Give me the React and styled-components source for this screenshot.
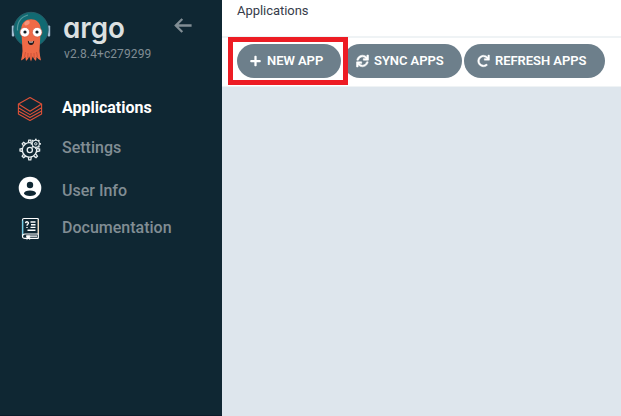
import React from 'react';
import styled, { createGlobalStyle } from 'styled-components';
import { FaPlus, FaSync, FaRedo } from 'react-icons/fa';

const GlobalStyle = createGlobalStyle`
  * { box-sizing: border-box; }
  body { margin: 0; font-family: Roboto, "Liberation Sans", sans-serif; overflow: hidden; }
`;

const Shell = styled.div`
  display: grid;
  grid-template-columns: 222px 1fr;
  width: 621px;
  height: 416px;
`;

const Sidebar = styled.nav`
  background: #0f2733;
  border-bottom: 1px solid #0b1c2b;
`;

const Brand = styled.header`
  display: flex;
  height: 88px;
  padding: 10px 0 0 11px;
`;

const Mascot = styled.svg`
  width: 40px;
  height: 53px;
  flex: none;
`;

const BrandText = styled.div`
  width: 110px;
  margin-left: 12px;
`;

const Wordmark = styled.svg`
  display: block;
  width: 64px;
  height: 36px;
  overflow: visible;
`;

const WordmarkText = styled.text`
  font-family: Inter, sans-serif;
  font-size: 29px;
  font-weight: 600;
  font-feature-settings: "cv11";
  fill: #dce0e1;
`;

const Version = styled.div`
  margin: 1px 0 0 1px;
  font-size: 12px;
  line-height: 14px;
  letter-spacing: 0.1px;
  color: #818d94;
  white-space: nowrap;
`;

const CollapseButton = styled.button`
  display: block;
  width: 20px;
  height: 20px;
  margin: 5px 0 0 0;
  padding: 0;
  border: 0;
  background: none;
  color: #818d94;
  svg { display: block; width: 20px; height: 20px; }
`;

const Menu = styled.ul`
  display: grid;
  grid-template-rows: 40px 40px 41px 40px;
  margin: 0;
  padding: 0;
  list-style: none;
`;

const MenuItem = styled.li`
  display: flex;
  align-items: center;
  padding-left: 18px;
  font-size: 16px;
  line-height: 20px;
  font-weight: ${(p) => (p.$active ? 700 : 500)};
  color: ${(p) => (p.$active ? '#ffffff' : '#818d94')};
`;

const MenuLabel = styled.span`
  margin: ${(p) => p.$shift || 0}px 0 0 20px;
`;

const MenuIcon = styled.svg`
  width: 24px;
  height: 24px;
  margin-top: ${(p) => p.$shift || 0}px;
  overflow: visible;
`;

const Main = styled.main`
  display: grid;
  grid-template-rows: 38px 49px 1fr;
  background: #dee6ed;
`;

const TitleBar = styled.div`
  padding: 3px 15px;
  border-bottom: 2px solid #eff3f5;
  background: #fff;
  font-size: 13px;
  line-height: 16px;
  letter-spacing: -0.04px;
  color: #363c4a;
`;

const Toolbar = styled.div`
  position: relative;
  display: flex;
  align-items: flex-start;
  padding: 6px 0 0 15px;
  gap: 2px;
  border-bottom: 1px solid #eff3f5;
  background: #fff;
`;

const ToolButton = styled.button`
  display: flex;
  align-items: center;
  width: ${(p) => p.$width}px;
  height: 34px;
  padding: 0 0 1px ${(p) => p.$inset}px;
  gap: 5px;
  border: 0;
  border-radius: 17px;
  background: #6d7f8b;
  color: #fff;
  font: 600 13px/16px Roboto, "Liberation Sans", sans-serif;
  letter-spacing: -0.05px;
  white-space: nowrap;
  svg { flex: none; width: 13px; height: 12px; overflow: visible; stroke: currentColor; stroke-width: ${(p) => p.$iconStroke || 0}; }
`;

const Highlight = styled.div`
  position: absolute;
  left: 6px;
  top: -1px;
  width: 120px;
  height: 48px;
  border: 5px solid #ed1c24;
  pointer-events: none;
`;

const Octopus = () => (
  <Mascot viewBox="0 0 40 53" aria-hidden="true">
    <rect x="0.8" y="15.5" width="2.6" height="11" rx="1" fill="#a5bfd4" />
    <rect x="36.6" y="15.5" width="2.6" height="11" rx="1" fill="#a5bfd4" />
    <circle cx="20" cy="19.5" r="17.2" fill="#116a72" stroke="#285d68" strokeWidth="1" />
    <path d="M6.5 20.5C6 12.5 10 7 17 5" fill="none" stroke="#56969b" strokeWidth="1.2" />
    <path d="M10.3 19C10.3 6 29.7 6 29.7 19L28.5 41Q29 47 30 50.5Q27 49.5 25.7 47L25 51Q22.5 49 21.8 46.5L20 51.5L18.2 46.5Q17.5 49 15 51L14.3 47Q13 49.5 10 50.5Q11 47 11.5 41Z" fill="#ef6a46" />
    <path d="M14.5 42L13.5 47M17 43L16.8 48M20 43V49M23 43L23.2 48M25.5 42L26.5 47" stroke="#c84d36" strokeWidth="0.8" />
    <ellipse cx="16" cy="13" rx="3" ry="2" fill="#f69379" transform="rotate(-32 16 13)" />
    <circle cx="13.8" cy="22.2" r="4.8" fill="#fff" stroke="#d84d32" strokeWidth="0.6" />
    <circle cx="26.2" cy="22.2" r="4.8" fill="#fff" stroke="#d84d32" strokeWidth="0.6" />
    <circle cx="14" cy="22" r="1.6" fill="#131d24" />
    <circle cx="26" cy="22" r="1.6" fill="#131d24" />
    <path d="M16.8 30.7Q20 32.7 23.2 30.7Q23 35 20 35Q17 35 16.8 30.7Z" fill="#241a1c" />
    <path d="M18 31.2Q20 32.3 22 31.2L21.7 32.5H18.3Z" fill="#fff" />
  </Mascot>
);

const BackArrow = () => (
  <svg viewBox="0 0 20 20" fill="none" stroke="currentColor" strokeWidth="2.3" aria-hidden="true">
    <path d="M9.3 4L2.8 10.5L9.3 17M3.2 10.5H18.6" />
  </svg>
);

const LayersIcon = () => (
  <MenuIcon viewBox="0 0 24 24" fill="none" stroke="#dd5138" strokeWidth="1.1" strokeLinejoin="round" $shift={2}>
    <path d="M12 .5L23.6 7L12 14.3L.4 7Z" />
    <path d="M.4 7V17L12 23.4L23.6 17V7M.4 10.7L12 17.6L23.6 10.7M.4 14L12 20.6L23.6 14" />
  </MenuIcon>
);

const teeth = (n) => Array.from({ length: n }, (_, i) => (i * 360) / n);

const GearsIcon = () => (
  <MenuIcon viewBox="0 0 24 24" fill="none" stroke="#e8eef0" strokeWidth="1.3" $shift={1}>
    <path d="M18.5 11.3A7.2 7.2 0 1 1 13 5.9" />
    <circle cx="11.8" cy="13" r="2.6" />
    {teeth(8).filter((a) => a !== 45).map((a) => (
      <path key={a} d="M10.3 5.8L10.8 3.2H12.8L13.3 5.8" transform={`rotate(${a} 11.8 13)`} />
    ))}
    <circle cx="17.8" cy="6.8" r="3.6" strokeWidth="1.1" />
    <circle cx="17.8" cy="6.8" r="1.2" strokeWidth="1" />
    {teeth(8).map((a) => (
      <path key={a} d="M17.8 3.1V1.7" strokeWidth="1.7" transform={`rotate(${a} 17.8 6.8)`} />
    ))}
  </MenuIcon>
);

const UserIcon = () => (
  <MenuIcon viewBox="0 0 24 24" $shift={-1}>
    <circle cx="12" cy="12" r="11.3" fill="#fff" />
    <circle cx="12" cy="9" r="3.2" fill="#0f2733" />
    <ellipse cx="12" cy="17.2" rx="6" ry="2.8" fill="#0f2733" />
  </MenuIcon>
);

const BookIcon = () => (
  <MenuIcon viewBox="0 0 24 24" fill="none" stroke="#fff" strokeWidth="1.2" $shift={-1}>
    <path d="M20.3 17V2.5Q20.3 1.5 19.3 1.5H6Q4.5 1.5 4.5 3V19" />
    <path d="M4.7 3.5V18" stroke="#67c9e5" strokeWidth="1.2" />
    <path d="M20.3 3V17" stroke="#eed0a7" strokeWidth=".8" />
    <path d="M20.3 17H7Q4.5 17 4.5 19.2T7 21.4H20.3M20.3 17V21.4M8 19.2H19" />
    <path d="M8.8 18.7V22.5L10.3 21.3L11.8 22.5V18.7Z" fill="#fff" strokeWidth=".5" />
    <path d="M7.5 6.2Q7.8 4.6 9.3 4.8Q11 5.4 10 7Q9 7.6 9 8.7M9 9.9V11M12.5 5H17.5M13 7.8H17.5M12.5 10.4H17.5M9.5 13.3H17.5" strokeWidth="1.4" />
  </MenuIcon>
);

export default function App() {
  return (
    <>
      <GlobalStyle />
      <Shell>
        <Sidebar>
          <Brand>
            <Octopus />
            <BrandText>
              <Wordmark aria-label="argo">
                <WordmarkText x="0" y="28" textLength="62" lengthAdjust="spacingAndGlyphs">argo</WordmarkText>
              </Wordmark>
              <Version>v2.8.4+c279299</Version>
            </BrandText>
            <CollapseButton aria-label="Collapse sidebar"><BackArrow /></CollapseButton>
          </Brand>
          <Menu>
            <MenuItem $active><LayersIcon /><MenuLabel>Applications</MenuLabel></MenuItem>
            <MenuItem><GearsIcon /><MenuLabel>Settings</MenuLabel></MenuItem>
            <MenuItem><UserIcon /><MenuLabel $shift={4}>User Info</MenuLabel></MenuItem>
            <MenuItem><BookIcon /><MenuLabel $shift={-2}>Documentation</MenuLabel></MenuItem>
          </Menu>
        </Sidebar>
        <Main>
          <TitleBar>Applications</TitleBar>
          <Toolbar>
            <ToolButton $width={104} $inset={12}><FaPlus />NEW APP</ToolButton>
            <ToolButton $width={119} $inset={13} $iconStroke={22}><FaSync />SYNC APPS</ToolButton>
            <ToolButton $width={141} $inset={13} $iconStroke={16}><FaRedo />REFRESH APPS</ToolButton>
            <Highlight />
          </Toolbar>
        </Main>
      </Shell>
    </>
  );
}
